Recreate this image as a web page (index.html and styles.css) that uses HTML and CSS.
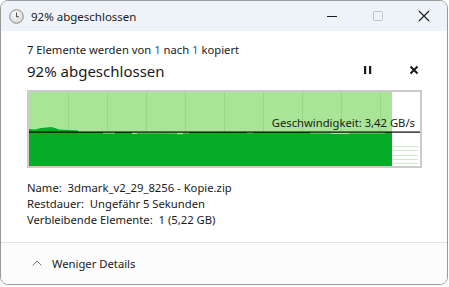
FILE: index.html
```html
<!DOCTYPE html>
<html lang="de">
<head>
<meta charset="utf-8">
<link rel="stylesheet" href="styles.css">
</head>
<body>
<div class="window">
  <div class="titlebar">
    <svg class="clock" width="15" height="15" viewBox="0 0 15 15">
      <defs>
        <radialGradient id="cg" cx="0.4" cy="0.35" r="0.7">
          <stop offset="0" stop-color="#ffffff"/>
          <stop offset="1" stop-color="#d4d4d4"/>
        </radialGradient>
      </defs>
      <circle cx="7.5" cy="7.5" r="6.8" fill="url(#cg)" stroke="#8e8e8e" stroke-width="1"/>
      <path d="M7.5 3.6 V7.8 H10" fill="none" stroke="#555" stroke-width="1.1"/>
    </svg>
    <span class="title">92% abgeschlossen</span>
    <div class="controls">
      <svg width="46" height="30" viewBox="0 0 46 30"><path d="M18 15.5 H28" stroke="#1a1a1a" stroke-width="1"/></svg>
      <svg width="46" height="30" viewBox="0 0 46 30"><rect x="18.5" y="10.5" width="9" height="9" rx="1" fill="none" stroke="#c2c2c2" stroke-width="1"/></svg>
      <svg width="46" height="30" viewBox="0 0 46 30"><path d="M18 10 L28 20 M28 10 L18 20" stroke="#1a1a1a" stroke-width="1.1"/></svg>
    </div>
  </div>
  <div class="content">
    <div class="line">7 Elemente werden von <span class="link">1</span> nach <span class="link">1</span> kopiert</div>
    <div class="heading-row">
      <div class="heading">92% abgeschlossen</div>
      <div class="actions">
        <svg class="btn" width="16" height="16" viewBox="0 0 16 16"><rect x="4" y="4" width="2.2" height="8" fill="#1a1a1a"/><rect x="9" y="4" width="2.2" height="8" fill="#1a1a1a"/></svg>
        <svg class="btn" width="16" height="16" viewBox="0 0 16 16"><path d="M4.5 4.5 L11.5 11.5 M11.5 4.5 L4.5 11.5" stroke="#1a1a1a" stroke-width="2"/></svg>
      </div>
    </div>
    <div class="graph">
      <svg class="chart" width="391" height="74" viewBox="0 0 391 74">
        <rect x="0" y="0" width="363" height="74" fill="#a9e597"/>
        <g stroke="#95d885" stroke-width="1">
          <path d="M39.5 0 V40 M78.5 0 V40 M117.5 0 V40 M156.5 0 V40 M195.5 0 V40 M234.5 0 V40 M273.5 0 V40 M312.5 0 V40 M351.5 0 V40"/>
        </g>
        <g stroke="#cdeec4" stroke-width="1">
          <path d="M363 54.5 H389 M363 58.5 H389 M363 63.5 H389 M363 67.5 H389 M363 71.5 H389"/>
        </g>
        <rect x="0" y="40" width="363" height="34" fill="#06ac26"/>
        <polygon points="0,37 6,37.5 12,36 18,35.5 22,35 26,36 30,37.5 40,38 49,38.5 49,40 0,40" fill="#06ac26"/>
        <g fill="#a9e597">
          <rect x="74" y="40" width="12" height="1.5"/>
          <rect x="103" y="40" width="5" height="2"/>
          <rect x="108" y="40" width="52" height="1.3"/>
          <rect x="137" y="40" width="14" height="1.2"/>
          <rect x="148" y="40" width="6" height="2.2"/>
          <rect x="218" y="40" width="6" height="1.2"/>
          <rect x="281" y="40" width="75" height="1.4"/>
          <rect x="302" y="40" width="18" height="2"/>
        </g>
        <rect x="0" y="39.5" width="391" height="1.2" fill="#000"/>
      </svg>
      <div class="speed">Geschwindigkeit: 3,42 GB/s</div>
    </div>
    <div class="details">
      <div class="line">Name:&nbsp; 3dmark_v2_29_8256 - Kopie.zip</div>
      <div class="line">Restdauer:&nbsp; Ungefähr 5 Sekunden</div>
      <div class="line">Verbleibende Elemente:&nbsp; 1 (5,22 GB)</div>
    </div>
  </div>
  <div class="footer">
    <svg class="chev" width="10" height="6" viewBox="0 0 10 6"><path d="M0.5 5.5 L5 1 L9.5 5.5" fill="none" stroke="#777" stroke-width="1"/></svg>
    <span>Weniger Details</span>
  </div>
</div>
</body>
</html>
```
FILE: styles.css
```css
html, body {
  margin: 0;
  padding: 0;
  background: #ffffff;
}
body {
  font-family: "Noto Sans", "Open Sans", "DejaVu Sans", sans-serif;
  font-size: 11.25px;
  color: #1a1a1a;
}
.window {
  box-sizing: border-box;
  width: 448px;
  height: 285px;
  border: 1px solid #9a9a9a;
  border-radius: 8px;
  overflow: hidden;
  background: #ffffff;
  display: flex;
  flex-direction: column;
}
.titlebar {
  height: 30px;
  flex: none;
  background: #eef3f9;
  display: flex;
  align-items: center;
  padding-left: 8px;
}
.clock {
  flex: none;
  margin-right: 7px;
}
.title {
  font-size: 11.5px;
  color: #1a1a1a;
}
.controls {
  margin-left: auto;
  display: flex;
}
.controls svg {
  display: block;
}
.content {
  flex: 1;
  padding: 11px 24px 0 26px;
}
.line {
  height: 16px;
  line-height: 16px;
  white-space: nowrap;
}
.link {
  color: #1a5fb4;
}
.heading-row {
  display: flex;
  align-items: center;
  height: 24px;
}
.heading {
  font-size: 15px;
  line-height: 22px;
  padding-top: 1px;
}
.actions {
  margin-left: auto;
  display: flex;
  gap: 30px;
  margin-right: 1px;
}
.btn {
  display: block;
}
.graph {
  position: relative;
  margin-top: 8px;
  width: 391px;
  height: 74px;
  border: 2px solid #cbcbcb;
}
.chart {
  display: block;
}
.speed {
  position: absolute;
  top: 23px;
  right: 5px;
  line-height: 16px;
  color: #1a1a1a;
}
.details {
  margin-top: 12px;
}
.footer {
  flex: none;
  height: 41px;
  border-top: 1px solid #e3e3e3;
  background: #fcfcfc;
  display: flex;
  align-items: center;
  padding-left: 31px;
}
.chev {
  margin-right: 10px;
  margin-top: -2px;
}
```
